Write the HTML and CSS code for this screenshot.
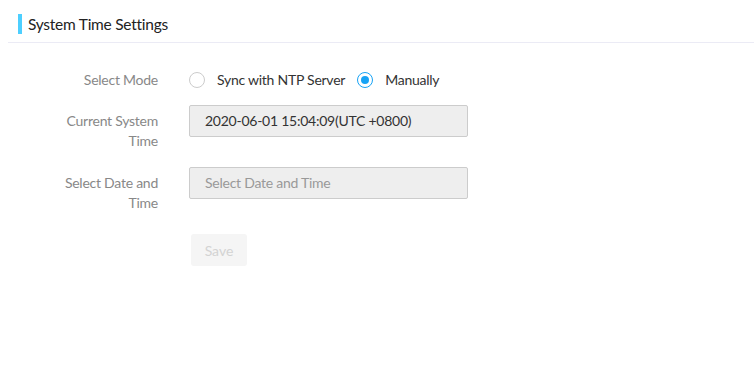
FILE: index.html
```html
<!DOCTYPE html>
<html lang="en">
<head>
    <meta charset="UTF-8">
    <meta name="viewport" content="width=device-width, initial-scale=1.0">
    <title>System Time Settings</title>
    <link rel="stylesheet" href="styles.css">
</head>
<body>
    <div class="panel">
        <div class="panel-header">
            <h2 class="panel-title">System Time Settings</h2>
        </div>

        <form class="form">
            <div class="form-row row-mode">
                <label class="form-label">Select Mode</label>
                <div class="form-field radios">
                    <label class="radio">
                        <span class="radio-dot"></span>
                        <span class="radio-text">Sync with NTP Server</span>
                    </label>
                    <label class="radio checked">
                        <span class="radio-dot"></span>
                        <span class="radio-text">Manually</span>
                    </label>
                </div>
            </div>

            <div class="form-row">
                <label class="form-label">Current System Time</label>
                <div class="form-field">
                    <div class="input">2020-06-01 15:04:09(UTC +0800)</div>
                </div>
            </div>

            <div class="form-row row-date">
                <label class="form-label">Select Date and Time</label>
                <div class="form-field">
                    <div class="input placeholder">Select Date and Time</div>
                </div>
            </div>

            <div class="form-row">
                <div class="form-label"></div>
                <div class="form-field">
                    <button type="button" class="btn" disabled>Save</button>
                </div>
            </div>
        </form>
    </div>
</body>
</html>
```

FILE: styles.css
```css
body {
    margin: 0;
    padding: 0 0 0 8px;
    font-family: Lato, "Open Sans", sans-serif;
    font-size: 14px;
    letter-spacing: -0.25px;
    color: #333;
    background: #fff;
}
.panel-header {
    padding: 14px 0 0 10px;
    height: 28px;
    border-bottom: 1px solid #ebebf5;
}
.panel-title {
    margin: 0;
    border-left: 4px solid #4dcfff;
    padding-left: 6px;
    font-size: 15.5px;
    font-weight: normal;
    line-height: 20px;
    color: #222;
}
.form {
    padding-top: 21px;
}
.form-row {
    display: flex;
    margin-bottom: 16px;
}
.row-mode {
    margin-bottom: 13px;
}
.row-date {
    margin-bottom: 21px;
}
.form-label {
    box-sizing: border-box;
    width: 150px;
    padding-left: 50px;
    text-align: right;
    color: #888;
    line-height: 20px;
    padding-top: 6px;
}
.form-field {
    margin-left: 31px;
}
.radios {
    display: flex;
    gap: 12px;
    padding-top: 4px;
}
.radio {
    display: flex;
    align-items: center;
    gap: 12px;
    line-height: 24px;
}
.radio-dot {
    width: 14px;
    height: 14px;
    border: 1px solid #ccc;
    border-radius: 50%;
    box-sizing: content-box;
    display: inline-block;
    position: relative;
}
.radio.checked .radio-dot {
    border-color: #17a3f5;
}
.radio.checked .radio-dot::after {
    content: "";
    position: absolute;
    left: 3px;
    top: 3px;
    width: 8px;
    height: 8px;
    border-radius: 50%;
    background: #17a3f5;
}
.input {
    width: 262px;
    height: 30px;
    line-height: 30px;
    padding-left: 15px;
    background: #eee;
    border: 1px solid #ccc;
    border-radius: 2px;
    color: #333;
}
.input.placeholder {
    color: #999;
}
.btn {
    width: 56px;
    height: 32px;
    margin-left: 2px;
    border: none;
    border-radius: 3px;
    background: #f5f5f5;
    color: #d3d3d3;
    font-family: inherit;
    font-size: 14px;
}
```
